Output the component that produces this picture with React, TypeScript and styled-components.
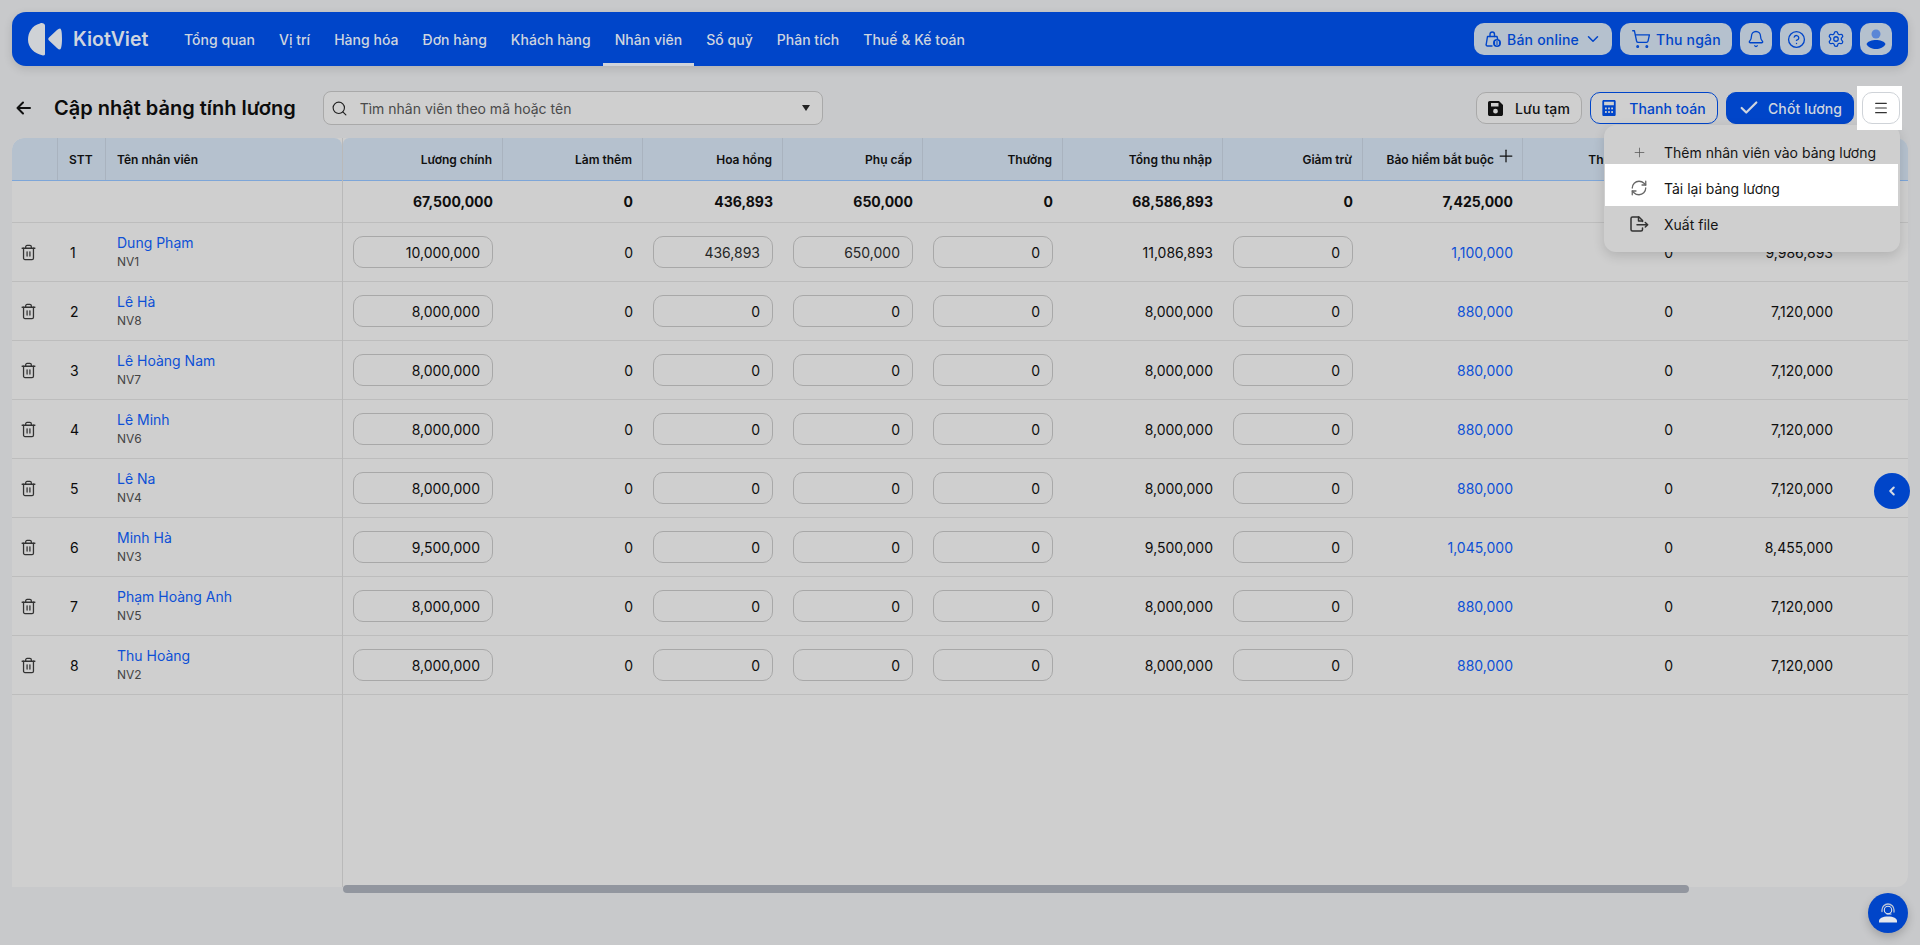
import React from "react";
import styled, { createGlobalStyle } from "styled-components";
import { Bell, Check, ChevronDown, ChevronLeft, CircleHelp, Menu, Plus, RefreshCw, Search, Settings, ShoppingCart, Trash2 } from "lucide-react";

const Global = createGlobalStyle`
  html, body { margin: 0; height: 100%; overflow: hidden; background: #c8c9cb; }
  body { font-family: Inter, "Noto Sans", sans-serif; color: #0b0b0b; }
  * { box-sizing: border-box; }
`;

const BLUE = "#0045c9";
const LINK = "#0d50d6";

const Page = styled.div`
  position: relative;
  width: 1920px;
  height: 945px;
  padding: 12px;
  display: flex;
  flex-direction: column;
  overflow: hidden;
`;

const NavBar = styled.header`
  height: 54px;
  flex: none;
  background: ${BLUE};
  border-radius: 14px;
  display: flex;
  align-items: stretch;
  padding: 0 16px;
  box-shadow: 0 3px 10px rgba(0, 0, 0, 0.12);
`;
const Brand = styled.div`
  display: flex;
  align-items: center;
  gap: 11px;
  width: 144px;
  color: #cfd5df;
  font-size: 19.5px;
  font-weight: 600;
`;
const NavList = styled.nav`
  display: flex;
  align-items: stretch;
`;
const NavItem = styled.a<{ $active?: boolean }>`
  display: flex;
  align-items: center;
  padding: 0 12px;
  color: #cfd5df;
  font-size: 14px;
  font-weight: 500;
  letter-spacing: 0.02px;
  border-bottom: 3px solid ${(p) => (p.$active ? "#cfd3da" : "transparent")};
  border-top: 3px solid transparent;
`;
const NavRight = styled.div`
  margin-left: auto;
  display: flex;
  align-items: center;
  gap: 8px;
`;
const PillButton = styled.button<{ $w: number }>`
  width: ${(p) => p.$w}px;
  height: 32px;
  border: 0;
  border-radius: 10px;
  background: #b5c1ce;
  color: ${BLUE};
  font: 500 14px Inter, sans-serif;
  letter-spacing: 0.2px;
  white-space: nowrap;
  display: flex;
  align-items: center;
  justify-content: center;
  gap: 5px;
  padding: 0;
`;

const Toolbar = styled.div`
  flex: none;
  height: 72px;
  padding: 25px 0 13px 4px;
  display: flex;
  align-items: center;
`;
const BackIcon = styled.svg`
  flex: none;
  margin-right: 23px;
`;
const Title = styled.h1`
  margin: 0;
  font-size: 20px;
  font-weight: 600;
  color: #0c0c0c;
  white-space: nowrap;
`;
const SearchBox = styled.div`
  position: relative;
  margin-left: 27px;
  width: 500px;
  height: 34px;
  border: 1px solid #a9a9a9;
  border-radius: 8px;
  background: #cfcfcf;
  display: flex;
  align-items: center;
  padding: 0 10px 0 7px;
  gap: 12px;
  font-size: 14px;
  color: #4a4a4a;
`;
const Caret = styled.span`
  margin-left: auto;
  margin-right: 2px;
  width: 0;
  height: 0;
  border-left: 4px solid transparent;
  border-right: 4px solid transparent;
  border-top: 6px solid #222;
`;
const Actions = styled.div`
  margin-left: auto;
  padding-right: 8px;
  display: flex;
  align-items: center;
  gap: 8px;
`;
const ActionButton = styled.button<{ $kind: "plain" | "outline" | "solid" }>`
  height: 32px;
  border-radius: 10px;
  font: 500 14px Inter, sans-serif;
  letter-spacing: 0.1px;
  display: flex;
  align-items: center;
  justify-content: center;
  gap: ${(p) => (p.$kind === "solid" ? "8px" : p.$kind === "plain" ? "12px" : "13px")};
  background: ${(p) => (p.$kind === "solid" ? BLUE : "#cfcfcf")};
  color: ${(p) => (p.$kind === "solid" ? "#cfd5df" : p.$kind === "outline" ? BLUE : "#111")};
  border: 1px solid ${(p) => (p.$kind === "plain" ? "#a9a9a9" : BLUE)};
  width: ${(p) => (p.$kind === "plain" ? "106px" : "128px")};
`;
const Spotlight = styled.div`
  position: relative;
  z-index: 5;
  margin: -6px -2px -6px -5px;
  padding: 6px 2px 6px 5px;
  background: #fff;
`;
const HamburgerButton = styled.button`
  width: 38px;
  height: 32px;
  border: 1px solid #cfd3d8;
  border-radius: 10px;
  background: #fff;
  color: #333;
  display: flex;
  align-items: center;
  justify-content: center;
  padding: 0;
`;

const DropMenu = styled.div`
  position: absolute;
  z-index: 4;
  top: 125px;
  left: 1604px;
  width: 296px;
  height: 127px;
  background: #cfcfcf;
  border-radius: 12px;
  padding: 9px 2px 0 1px;
  box-shadow: 0 4px 12px rgba(0, 0, 0, 0.14);
  display: flex;
  flex-direction: column;
`;
const DropItem = styled.div<{ $lit?: boolean }>`
  height: ${(p) => (p.$lit ? "42px" : "36px")};
  margin-top: ${(p) => (p.$lit ? "-6px" : "0")};
  padding-top: ${(p) => (p.$lit ? "6px" : "0")};
  flex: none;
  display: flex;
  align-items: center;
  padding-left: 16px;
  font-size: 14px;
  color: #141414;
  background: ${(p) => (p.$lit ? "#fff" : "transparent")};
`;
const DropIcon = styled.span<{ $lit?: boolean }>`
  width: 36px;
  flex: none;
  display: flex;
  justify-content: center;
  margin-right: 7px;
  color: ${(p) => (p.$lit ? "#666" : "#444")};
`;

const Table = styled.section`
  flex: none;
  width: 1896px;
  height: 749px;
  display: flex;
  background: #cfcfcf;
  border-radius: 12px 12px 12px 0;
  overflow: hidden;
`;
const Frozen = styled.div`
  flex: none;
  width: 331px;
  border-right: 1px solid #b9b9b9;
`;
const Scroller = styled.div`
  flex: 1;
  overflow: hidden;
`;
const HeadRow = styled.div<{ $frozen?: boolean }>`
  display: flex;
  height: 43px;
  background: #b5c1ce;
  border-bottom: 1px solid #7ea6d8;
  width: ${(p) => (p.$frozen ? "330px" : "1840px")};
  border-radius: ${(p) => (p.$frozen ? "12px 8px 0 0" : "6px 0 0 0")};
`;
const HeadCell = styled.div<{ $w: number; $left?: boolean; $last?: boolean }>`
  flex: none;
  width: ${(p) => p.$w}px;
  display: flex;
  align-items: center;
  justify-content: ${(p) => (p.$left ? "flex-start" : "flex-end")};
  gap: 5px;
  padding: ${(p) => (p.$left ? "0 0 0 11px" : "0 10px 0 0")};
  font-size: 12px;
  font-weight: 600;
  color: #101010;
  white-space: nowrap;
  border-right: ${(p) => (p.$last ? "0" : "1px solid #a9b3bf")};
`;
const HeadPlus = styled(Plus)`
  flex: none;
  margin: -3px -4px 3px -3px;
`;
const Row = styled.div<{ $h: number; $wide?: boolean }>`
  display: flex;
  height: ${(p) => p.$h}px;
  border-bottom: 1px solid #bdbdbd;
  width: ${(p) => (p.$wide ? "1840px" : "100%")};
`;
const Cell = styled.div<{ $w: number; $bold?: boolean; $link?: boolean }>`
  flex: none;
  width: ${(p) => p.$w}px;
  display: flex;
  align-items: center;
  justify-content: flex-end;
  padding-right: 10px;
  font-size: 14px;
  font-weight: ${(p) => (p.$bold ? 700 : 400)};
  color: ${(p) => (p.$link ? LINK : "#0e0e0e")};
`;
const AmountField = styled.div<{ $w: number; $muted?: boolean }>`
  width: ${(p) => p.$w}px;
  height: 32px;
  border: 1px solid #a8a8a8;
  border-radius: 10px;
  display: flex;
  align-items: center;
  justify-content: flex-end;
  padding-right: 12px;
  color: ${(p) => (p.$muted ? "#262626" : "#0e0e0e")};
`;
const TrashCell = styled.div`
  flex: none;
  width: 46px;
  display: flex;
  align-items: center;
  padding-left: 8px;
  color: #333;
`;
const IndexCell = styled.div`
  flex: none;
  width: 48px;
  display: flex;
  align-items: center;
  padding-left: 12px;
  font-size: 14px;
`;
const NameCell = styled.div`
  flex: 1;
  padding-left: 11px;
  display: flex;
  flex-direction: column;
  justify-content: center;
`;
const Name = styled.span`
  font-size: 14px;
  line-height: 20px;
  color: ${LINK};
`;
const Code = styled.span`
  font-size: 12px;
  line-height: 18px;
  color: #444;
`;

const ScrollThumb = styled.div`
  position: absolute;
  left: 343px;
  top: 885px;
  width: 1346px;
  height: 8px;
  border-radius: 4px;
  background: #92969f;
`;
const SideToggle = styled.button`
  position: absolute;
  left: 1874px;
  top: 473px;
  width: 36px;
  height: 36px;
  border-radius: 50%;
  border: 0;
  padding: 0;
  background: ${BLUE};
  color: #d6dbe3;
  display: flex;
  align-items: center;
  justify-content: center;
`;
const SupportFab = styled.button`
  position: absolute;
  left: 1868px;
  top: 893px;
  width: 40px;
  height: 40px;
  border-radius: 50%;
  border: 0;
  padding: 0;
  background: ${BLUE};
  box-shadow: 0 4px 10px rgba(0, 0, 0, 0.2);
  display: flex;
  align-items: center;
  justify-content: center;
`;

const navItems = ["Tổng quan", "Vị trí", "Hàng hóa", "Đơn hàng", "Khách hàng", "Nhân viên", "Sổ quỹ", "Phân tích", "Thuế & Kế toán"];

const W = [160, 140, 140, 140, 140, 160, 140, 160, 160, 160];
const headers = ["Lương chính", "Làm thêm", "Hoa hồng", "Phụ cấp", "Thưởng", "Tổng thu nhập", "Giảm trừ", "Bảo hiểm bắt buộc", "Thuế thu nhập", "Thực lĩnh"];
const totals = ["67,500,000", "0", "436,893", "650,000", "0", "68,586,893", "0", "7,425,000", "0", "61,161,893"];

type Emp = { name: string; code: string; base: string; hh: string; pc: string; total: string; ins: string; net: string };
const employees: Emp[] = [
  { name: "Dung Phạm", code: "NV1", base: "10,000,000", hh: "436,893", pc: "650,000", total: "11,086,893", ins: "1,100,000", net: "9,986,893" },
  { name: "Lê Hà", code: "NV8", base: "8,000,000", hh: "0", pc: "0", total: "8,000,000", ins: "880,000", net: "7,120,000" },
  { name: "Lê Hoàng Nam", code: "NV7", base: "8,000,000", hh: "0", pc: "0", total: "8,000,000", ins: "880,000", net: "7,120,000" },
  { name: "Lê Minh", code: "NV6", base: "8,000,000", hh: "0", pc: "0", total: "8,000,000", ins: "880,000", net: "7,120,000" },
  { name: "Lê Na", code: "NV4", base: "8,000,000", hh: "0", pc: "0", total: "8,000,000", ins: "880,000", net: "7,120,000" },
  { name: "Minh Hà", code: "NV3", base: "9,500,000", hh: "0", pc: "0", total: "9,500,000", ins: "1,045,000", net: "8,455,000" },
  { name: "Phạm Hoàng Anh", code: "NV5", base: "8,000,000", hh: "0", pc: "0", total: "8,000,000", ins: "880,000", net: "7,120,000" },
  { name: "Thu Hoàng", code: "NV2", base: "8,000,000", hh: "0", pc: "0", total: "8,000,000", ins: "880,000", net: "7,120,000" },
];

const Logo = () => (
  <svg width="34" height="33" viewBox="28 22.5 34 33" fill="#cfd2d6">
    <path d="M40 23C32 25 28 32 28 39C28 47 34 53 43 55C45 55 45 54 45 53L45 25C45 23 42 22 40 23Z" />
    <path d="M60 28C61.500 28.500 62 32 62 38.500C62 45 61 49 60 49C59 49 58 48.500 57 47.500L49 40C48 39 48 38 49 37L57 29.500C58 28.500 59 28 60 28Z" />
  </svg>
);
const BagGlobe = () => (
  <svg width="18" height="18" viewBox="0 0 18 18" fill="none" stroke={BLUE} strokeWidth="1.4" strokeLinecap="round" strokeLinejoin="round">
    <path d="M8 16H3.500C2.600 16 2 15.300 2.200 14.500L3.500 6.500H13L13.600 9" />
    <path d="M6 6.500V4.500C6 3 7 2 8.300 2C9.600 2 10.500 3 10.500 4.500V6.500" />
    <circle cx="13" cy="13" r="4" fill={BLUE} stroke="none" />
    <path d="M13 10.500V15.500M11.500 11.500V14.500M14.500 11.500V14.500" stroke="#b5c1ce" strokeWidth="0.9" />
  </svg>
);
const Avatar = () => (
  <svg width="24" height="24" viewBox="0 0 24 24">
    <circle cx="12" cy="7" r="4.500" fill="#5b86d6" />
    <path d="M2.500 17C4 14 8 13 12 13C16 13 20 14 21.500 17C20 20.500 16 22 12 22C8 22 4 20.500 2.500 17Z" fill={BLUE} />
  </svg>
);
const SaveIcon = () => (
  <svg width="15" height="15" viewBox="0 0 15 15" fill="#111">
    <path fillRule="evenodd" d="M1.800 0H11L15 4V13.200C15 14.200 14.200 15 13.200 15H1.800C.8 15 0 14.200 0 13.200V1.800C0 .8 .8 0 1.800 0ZM3 2V5.500H10.500V2H3ZM7.500 7.800A2.400 2.400 0 1 0 7.500 12.600A2.400 2.400 0 0 0 7.500 7.800Z" />
  </svg>
);
const CalcIcon = () => (
  <svg width="14" height="16" viewBox="0 0 15 18">
    <path fillRule="evenodd" fill={BLUE} d="M1.500 0H13.500C14.300 0 15 .7 15 1.500V16.500C15 17.300 14.300 18 13.500 18H1.500C.7 18 0 17.300 0 16.500V1.500C0 .7 .7 0 1.500 0ZM2 2V6H13V2H2Z" />
    <g fill="#cfcfcf">
      <rect x="3" y="8.500" width="2" height="2" /><rect x="6.500" y="8.500" width="2" height="2" /><rect x="10" y="8.500" width="2" height="2" />
      <rect x="3" y="12.500" width="2" height="2" /><rect x="6.500" y="12.500" width="2" height="2" /><rect x="10" y="12.500" width="2" height="2" />
    </g>
  </svg>
);
const ExportIcon = () => (
  <svg width="19" height="16" viewBox="0 0 19 16" fill="none" stroke="#333" strokeWidth="1.500" strokeLinejoin="round" strokeLinecap="round">
    <path d="M12.500 5.500V4.500L9 1H2.500C1.700 1 1 1.700 1 2.500V13.500C1 14.300 1.700 15 2.500 15H11C11.800 15 12.500 14.300 12.500 13.500V12" />
    <path d="M8.500 1V5H12.500" />
    <path d="M7 8.700H17.500M15.300 6.500L17.700 8.700L15.300 11" />
  </svg>
);
const SupportIcon = () => (
  <svg width="20" height="20" viewBox="0 0 20 20" fill="none">
    <path d="M4 8.500V7A6 6 0 0 1 16 7V9" stroke="#b9c4d6" strokeWidth="1.300" strokeLinecap="round" />
    <circle cx="10" cy="7" r="3.700" stroke="#dfe3ea" strokeWidth="1.100" />
    <path d="M9 11H13" stroke="#dfe3ea" strokeWidth="1.100" strokeLinecap="round" />
    <path d="M1 19.500V18C1 15.500 4.500 13.500 10 13.500C15.500 13.500 19 15.500 19 18V19.500Z" fill="#e4e7ec" />
  </svg>
);

function Amount({ w, value, muted }: { w: number; value: string; muted?: boolean }) {
  return (
    <Cell $w={w}>
      <AmountField $w={w - 20} $muted={muted}>{value}</AmountField>
    </Cell>
  );
}

export default function App() {
  return (
    <Page>
      <Global />
      <NavBar>
        <Brand>
          <Logo />
          KiotViet
        </Brand>
        <NavList>
          {navItems.map((n) => (
            <NavItem key={n} $active={n === "Nhân viên"}>{n}</NavItem>
          ))}
        </NavList>
        <NavRight>
          <PillButton $w={138}>
            <BagGlobe />
            Bán online
            <ChevronDown size={18} strokeWidth={2} />
          </PillButton>
          <PillButton $w={112}>
            <ShoppingCart size={20} strokeWidth={1.6} />
            Thu ngân
          </PillButton>
          <PillButton $w={32}><Bell size={18} strokeWidth={1.7} /></PillButton>
          <PillButton $w={32}><CircleHelp size={19} strokeWidth={1.7} /></PillButton>
          <PillButton $w={32}><Settings size={18} strokeWidth={1.7} /></PillButton>
          <PillButton $w={32}><Avatar /></PillButton>
        </NavRight>
      </NavBar>

      <Toolbar>
        <BackIcon width="15" height="14" viewBox="0 0 15 14" fill="none" stroke="#111" strokeWidth="2" strokeLinecap="round" strokeLinejoin="round">
          <path d="M1.500 7H14M7 1.500L1.500 7L7 12.500" />
        </BackIcon>
        <Title>Cập nhật bảng tính lương</Title>
        <SearchBox>
          <Search size={17} strokeWidth={1.6} color="#222" />
          Tìm nhân viên theo mã hoặc tên
          <Caret />
        </SearchBox>
        <Actions>
          <ActionButton $kind="plain"><SaveIcon />Lưu tạm</ActionButton>
          <ActionButton $kind="outline"><CalcIcon />Thanh toán</ActionButton>
          <ActionButton $kind="solid"><Check size={22} strokeWidth={2.4} />Chốt lương</ActionButton>
          <Spotlight>
            <HamburgerButton><Menu size={16} strokeWidth={1.8} /></HamburgerButton>
          </Spotlight>
        </Actions>
      </Toolbar>

      <DropMenu>
        <DropItem>
          <DropIcon><Plus size={15} strokeWidth={1.2} color="#555" /></DropIcon>
          Thêm nhân viên vào bảng lương
        </DropItem>
        <DropItem $lit>
          <DropIcon $lit><RefreshCw size={18} strokeWidth={1.7} /></DropIcon>
          Tải lại bảng lương
        </DropItem>
        <DropItem>
          <DropIcon><ExportIcon /></DropIcon>
          Xuất file
        </DropItem>
      </DropMenu>

      <Table>
        <Frozen>
          <HeadRow $frozen>
            <HeadCell $w={46} $left />
            <HeadCell $w={48} $left>STT</HeadCell>
            <HeadCell $w={236} $left $last>Tên nhân viên</HeadCell>
          </HeadRow>
          <Row $h={42} />
          {employees.map((e, i) => (
            <Row $h={59} key={e.code}>
              <TrashCell><Trash2 size={17} strokeWidth={1.8} /></TrashCell>
              <IndexCell>{i + 1}</IndexCell>
              <NameCell>
                <Name>{e.name}</Name>
                <Code>{e.code}</Code>
              </NameCell>
            </Row>
          ))}
        </Frozen>
        <Scroller>
          <HeadRow>
            {headers.map((h, i) => (
              <HeadCell key={h} $w={W[i]}>
                {h}
                {i === 7 && <HeadPlus size={20} strokeWidth={1.5} />}
              </HeadCell>
            ))}
          </HeadRow>
          <Row $h={42} $wide>
            {totals.map((t, i) => (
              <Cell key={i} $w={W[i]} $bold>{t}</Cell>
            ))}
          </Row>
          {employees.map((e) => (
            <Row $h={59} $wide key={e.code}>
              <Amount w={W[0]} value={e.base} />
              <Cell $w={W[1]}>0</Cell>
              <Amount w={W[2]} value={e.hh} muted={e.hh !== "0"} />
              <Amount w={W[3]} value={e.pc} muted={e.pc !== "0"} />
              <Amount w={W[4]} value="0" />
              <Cell $w={W[5]}>{e.total}</Cell>
              <Amount w={W[6]} value="0" />
              <Cell $w={W[7]} $link>{e.ins}</Cell>
              <Cell $w={W[8]}>0</Cell>
              <Cell $w={W[9]}>{e.net}</Cell>
            </Row>
          ))}
        </Scroller>
      </Table>

      <ScrollThumb />
      <SideToggle><ChevronLeft size={14} strokeWidth={3.5} /></SideToggle>
      <SupportFab><SupportIcon /></SupportFab>
    </Page>
  );
}
